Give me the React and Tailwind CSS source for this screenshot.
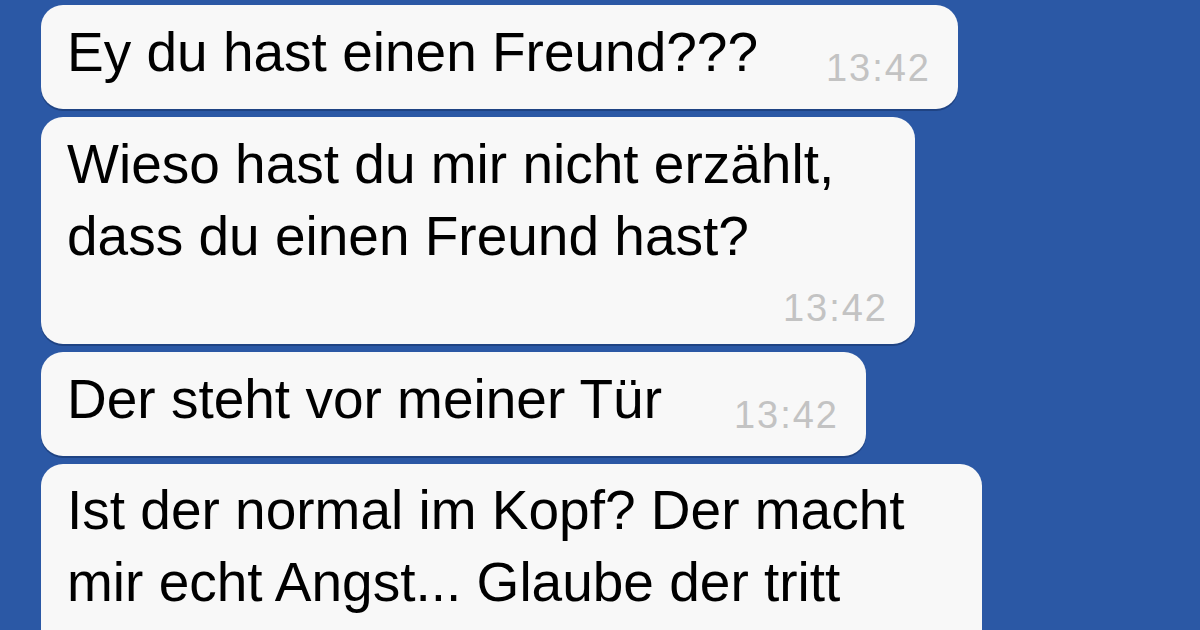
export default function App() {
  const font = { fontFamily: '"Liberation Sans", Arial, sans-serif' };

  return (
    <div
      className="h-[630px] w-[1200px] overflow-hidden bg-[#2b58a5]"
      style={font}
    >
      <div className="flex flex-col items-start gap-2 pl-[41px] pt-[5px]">
        <Bubble width="w-[917px]" time="13:42">
          Ey du hast einen Freund???
        </Bubble>

        <div className="flex w-[874px] flex-col rounded-[22px] bg-[#f8f8f8] pb-4 pl-[26px] pr-[27px] pt-[11px] shadow-[0_2px_0_rgba(10,30,70,0.35)]">
          <p className="text-[55px] leading-[72px] text-black">
            Wieso hast du mir nicht erzählt,
            <br />
            dass du einen Freund hast?
          </p>
          <div className="mt-4 flex justify-end">
            <span className="text-[38px] leading-[40px] tracking-[2px] text-[#c3c3c3]">
              13:42
            </span>
          </div>
        </div>

        <Bubble width="w-[825px]" time="13:42">
          Der steht vor meiner Tür
        </Bubble>

        <div className="flex w-[941px] flex-col rounded-[22px] bg-[#f8f8f8] pb-12 pl-[26px] pr-[27px] pt-[10px] shadow-[0_2px_0_rgba(10,30,70,0.35)]">
          <p className="text-[55px] leading-[72px] text-black">
            Ist der normal im Kopf? Der macht
            <br />
            mir echt Angst... Glaube der tritt
          </p>
        </div>
      </div>
    </div>
  );
}

function Bubble(props) {
  const width = props.width;
  const time = props.time;

  return (
    <div
      className={`flex ${width} items-end justify-between rounded-[22px] bg-[#f8f8f8] pb-[21px] pl-[26px] pr-[27px] pt-[11px] shadow-[0_2px_0_rgba(10,30,70,0.35)]`}
    >
      <p className="text-[55px] leading-[72px] text-black">{props.children}</p>
      <span className="text-[38px] leading-[40px] tracking-[2px] text-[#c3c3c3]">
        {time}
      </span>
    </div>
  );
}
